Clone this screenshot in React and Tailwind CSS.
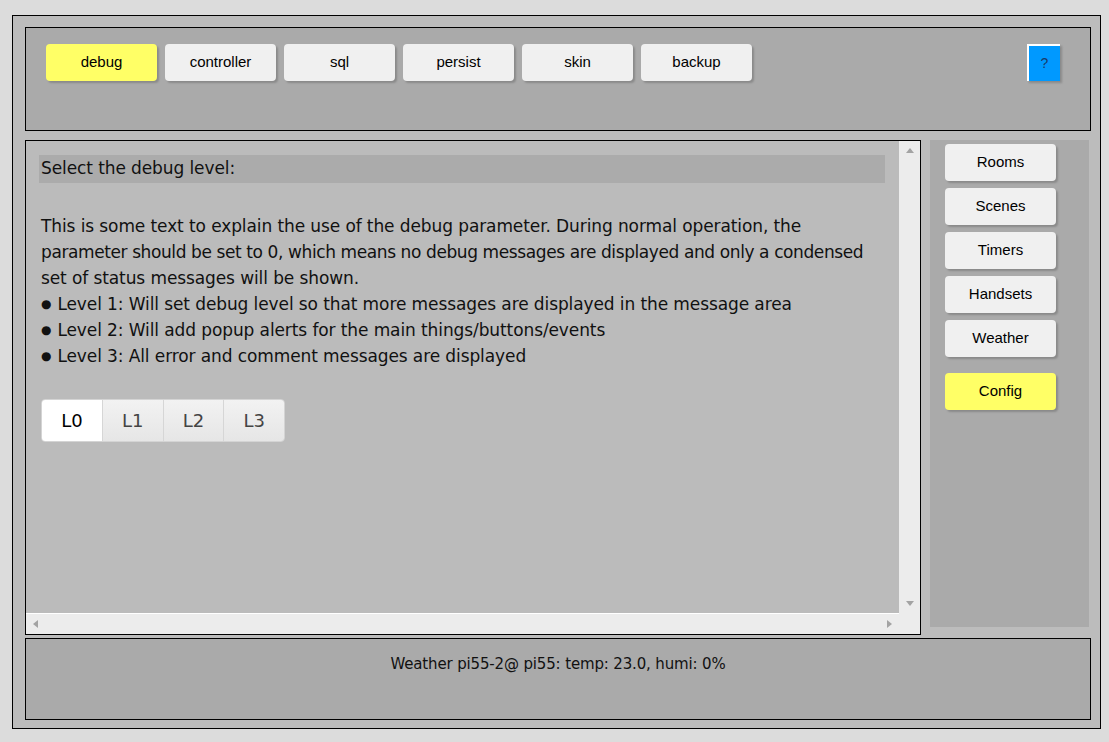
const topTabs = ['debug', 'controller', 'sql', 'persist', 'skin', 'backup'];
const sideItems = ['Rooms', 'Scenes', 'Timers', 'Handsets', 'Weather'];
const levels = ['L0', 'L1', 'L2', 'L3'];

const btn =
  "w-[111px] rounded-[4px] flex items-center justify-center text-[15px] text-black font-['Liberation_Sans',Arial,sans-serif] shadow-[2px_2px_2px_#8a8a8a]";

const ScrollArrow = ({ dir }) => {
  const pts = {
    up: '0,5 4,0 8,5',
    down: '0,0 8,0 4,5',
    left: '5,0 5,8 0,4',
    right: '0,0 0,8 5,4',
  }[dir];
  const vertical = dir === 'up' || dir === 'down';
  return (
    <svg width={vertical ? 8 : 5} height={vertical ? 5 : 8}>
      <polygon points={pts} fill="#a3a3a3" />
    </svg>
  );
};

const Bullet = ({ children }) => (
  <div className="h-[26px] flex items-center whitespace-nowrap">
    <span className="text-[12px] leading-none mr-[6px]">●</span>
    {children}
  </div>
);

const App = () => {
  return (
    <div className="w-[1109px] h-[742px] bg-[#dcdcdc] pt-[15px] pl-[12px]">
      <div className="w-[1089px] h-[714px] border border-black bg-[#bcbcbc] pt-[11px] pl-[12px] pr-[9px] flex flex-col">
        {/* Top bar */}
        <div className="h-[104px] border border-black bg-[#aaaaaa] flex items-start pt-[16px] pl-[20px] pr-[30px]">
          <div className="flex gap-[8px]">
            {topTabs.map((t, i) => (
              <div key={t} className={`${btn} h-[37px] ${i === 0 ? 'bg-[#ffff66]' : 'bg-[#f0f0f0]'}`}>
                {t}
              </div>
            ))}
          </div>
          <div className="ml-auto w-[33px] h-[37px] bg-[#0099ff] border-t-2 border-l-2 border-white flex items-center justify-center text-[14px] text-[#1a3a6a] font-['Liberation_Sans',Arial,sans-serif] shadow-[2px_2px_2px_#8a8a8a]">
            ?
          </div>
        </div>

        <div className="flex mt-[9px] gap-[9px]">
          {/* Main panel */}
          <div className="w-[896px] h-[495px] border border-black bg-[#bbbbbb] flex flex-col">
            <div className="flex flex-1 min-h-0">
              <div className="flex-1 min-w-0 pt-[14px] pl-[13px] pr-[14px] text-[17px] text-[#111] font-['DejaVu_Sans',sans-serif] tracking-[-0.1px]">
                <div className="h-[28px] bg-[#ababab] flex items-center pl-[2px]">
                  Select the debug level:
                </div>
                <div className="mt-[30px] pl-[2px] leading-[26px] whitespace-nowrap">
                  <div className="h-[26px]">This is some text to explain the use of the debug parameter. During normal operation, the</div>
                  <div className="h-[26px] tracking-[-0.4px]">parameter should be set to 0, which means no debug messages are displayed and only a condensed</div>
                  <div className="h-[26px]">set of status messages will be shown.</div>
                  <Bullet>Level 1: Will set debug level so that more messages are displayed in the message area</Bullet>
                  <Bullet>Level 2: Will add popup alerts for the main things/buttons/events</Bullet>
                  <Bullet>Level 3: All error and comment messages are displayed</Bullet>
                </div>
                <div className="mt-[30px] ml-[2px] flex w-[244px] h-[43px] rounded-[4px] overflow-hidden border border-[#d4d4d4] font-['DejaVu_Sans',sans-serif] text-[18px] tracking-normal">
                  {levels.map((l, i) => (
                    <div
                      key={l}
                      className={`flex-1 flex items-center justify-center ${
                        i === 0
                          ? 'bg-white text-black'
                          : 'bg-gradient-to-b from-[#f2f2f2] to-[#e6e6e6] text-[#444] border-l border-[#d6d6d6]'
                      }`}
                    >
                      {l}
                    </div>
                  ))}
                </div>
              </div>
              {/* vertical scrollbar */}
              <div className="w-[21px] bg-[#ececec] flex flex-col items-center justify-between py-[7px]">
                <ScrollArrow dir="up" />
                <ScrollArrow dir="down" />
              </div>
            </div>
            <div className="flex h-[21px]">
              <div className="flex-1 bg-[#ececec] border-t border-white flex items-center justify-between px-[7px]">
                <ScrollArrow dir="left" />
                <ScrollArrow dir="right" />
              </div>
              <div className="w-[21px] bg-[#ececec]" />
            </div>
          </div>

          {/* Sidebar */}
          <div className="w-[159px] h-[487px] bg-[#aaaaaa] pt-[4px] pl-[15px] flex flex-col">
            {sideItems.map((s) => (
              <div key={s} className={`${btn} h-[37px] mb-[7px] bg-[#f0f0f0]`}>
                {s}
              </div>
            ))}
            <div className={`${btn} h-[37px] mt-[9px] bg-[#ffff66]`}>Config</div>
          </div>
        </div>

        {/* Bottom status */}
        <div className="mt-[3px] h-[82px] border border-black bg-[#aaaaaa] flex justify-center pt-[14px] text-[15px] text-[#111] font-['DejaVu_Sans',sans-serif] tracking-[-0.15px]">
          Weather pi55-2@ pi55: temp: 23.0, humi: 0%
        </div>
      </div>
    </div>
  );
};

export default App;
